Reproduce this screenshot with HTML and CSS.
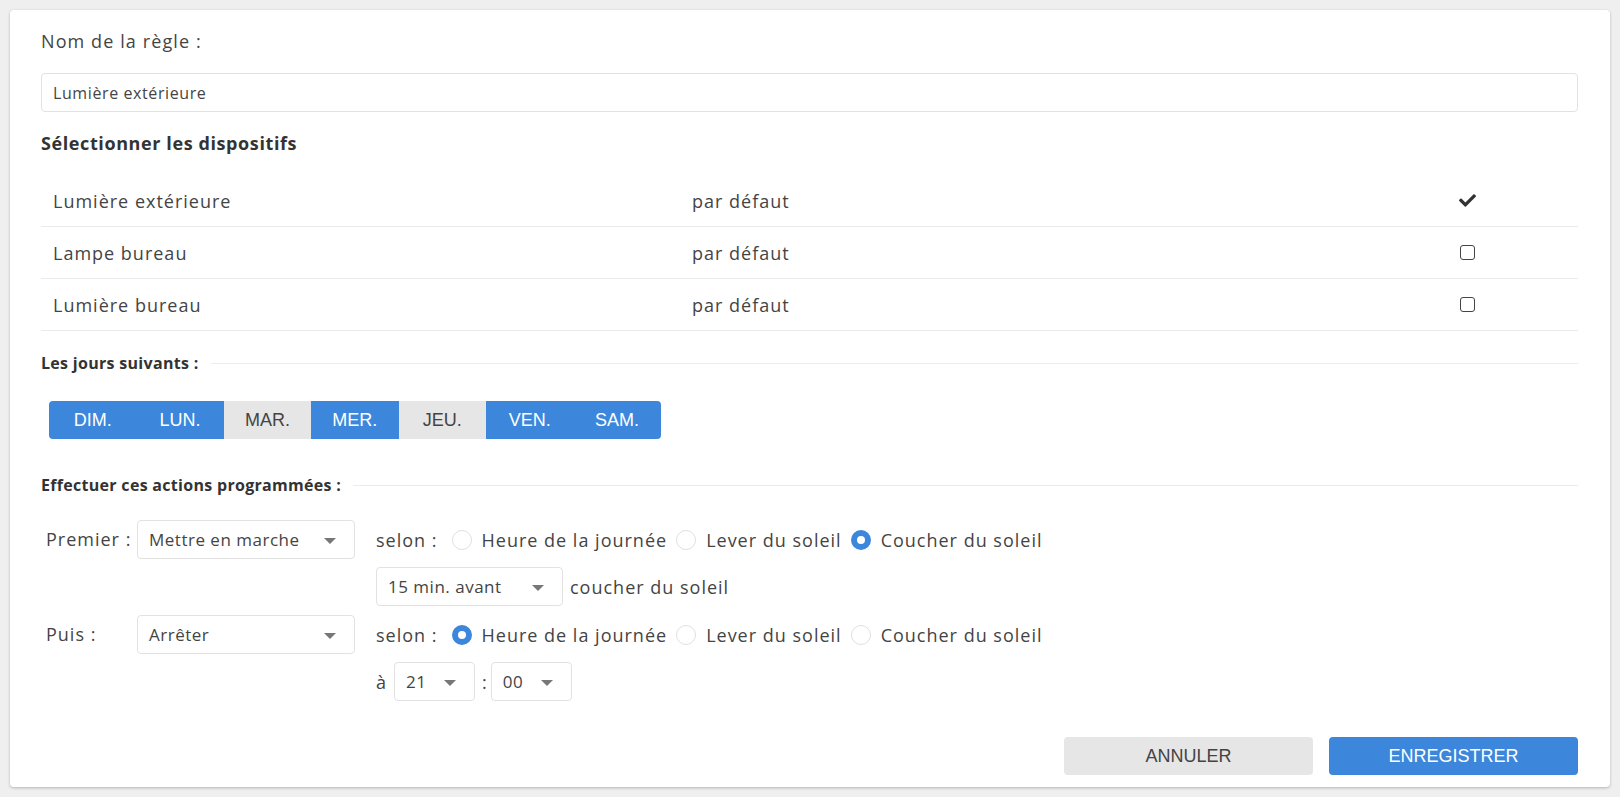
FILE: index.html
```html
<!DOCTYPE html>
<html lang="fr">
<head>
  <meta charset="UTF-8" />
  <title>Règle</title>
  <link rel="stylesheet" href="styles.css">
</head>
<body>

  <div class="card">
    <label class="field-label">Nom de la règle :</label>
    <input class="name-input" type="text" value="Lumière extérieure">

    <h2>Sélectionner les dispositifs</h2>
    <div class="devices">
      <div class="device-row">
        <span class="cell">Lumière extérieure</span>
        <span class="cell">par défaut</span>
        <span class="check">
          <svg width="17" height="13" viewBox="0 60 512 392"><path d="M173.898 439.404l-166.4-166.4c-9.997-9.997-9.997-26.206 0-36.204l36.203-36.204c9.997-9.998 26.207-9.998 36.204 0L192 312.69 432.095 72.596c9.997-9.997 26.207-9.997 36.204 0l36.203 36.204c9.997 9.997 9.997 26.206 0 36.204l-294.4 294.401c-9.998 9.997-26.207 9.997-36.204-.001z" fill="#333"/></svg>
        </span>
      </div>
      <div class="device-row">
        <span class="cell">Lampe bureau</span>
        <span class="cell">par défaut</span>
        <span class="check"><span class="box"></span></span>
      </div>
      <div class="device-row">
        <span class="cell">Lumière bureau</span>
        <span class="cell">par défaut</span>
        <span class="check"><span class="box"></span></span>
      </div>
    </div>

    <div class="legend">Les jours suivants :</div>
    <div class="days">
      <span class="day on">DIM.</span>
      <span class="day on">LUN.</span>
      <span class="day">MAR.</span>
      <span class="day on">MER.</span>
      <span class="day">JEU.</span>
      <span class="day on">VEN.</span>
      <span class="day on">SAM.</span>
    </div>

    <div class="legend">Effectuer ces actions programmées :</div>

    <div class="actions">
      <div class="action">
        <span class="action-label">Premier :</span>
        <div class="select wide">Mettre en marche<i class="caret"></i></div>
        <div class="action-detail">
          <div class="line">
            <span class="selon">selon :</span>
            <span class="radio"></span><span class="opt">Heure de la journée</span>
            <span class="radio"></span><span class="opt">Lever du soleil</span>
            <span class="radio on"></span><span class="opt">Coucher du soleil</span>
          </div>
          <div class="line">
            <div class="select mid">15 min. avant<i class="caret"></i></div>
            <span class="after">coucher du soleil</span>
          </div>
        </div>
      </div>

      <div class="action">
        <span class="action-label">Puis :</span>
        <div class="select wide">Arrêter<i class="caret"></i></div>
        <div class="action-detail">
          <div class="line">
            <span class="selon">selon :</span>
            <span class="radio on"></span><span class="opt">Heure de la journée</span>
            <span class="radio"></span><span class="opt">Lever du soleil</span>
            <span class="radio"></span><span class="opt">Coucher du soleil</span>
          </div>
          <div class="line">
            <span class="at">à</span>
            <div class="select small">21<i class="caret"></i></div>
            <span class="colon">:</span>
            <div class="select small">00<i class="caret"></i></div>
          </div>
        </div>
      </div>
    </div>

    <div class="footer">
      <button class="btn cancel">ANNULER</button>
      <button class="btn save">ENREGISTRER</button>
    </div>
  </div>

</body>
</html>
```

FILE: styles.css
```css
body {
  margin: 0;
  padding: 10px;
  background: #efefef;
  font-family: "Open Sans", Arial, sans-serif;
  color: #444;
}
.card {
  background: #fff;
  border-radius: 4px;
  box-shadow: 0 1px 3px rgba(0, 0, 0, 0.25);
  padding: 20px 32px 12px 31px;
  height: 777px;
  box-sizing: border-box;
  display: flex;
  flex-direction: column;
}
.field-label {
  font-size: 18px;
  letter-spacing: 1.1px;
  line-height: 22px;
}
.name-input {
  margin-top: 21px;
  height: 39px;
  box-sizing: border-box;
  border: 1px solid #e2e2e2;
  border-radius: 4px;
  padding: 0 11px;
  font-family: inherit;
  font-size: 16px;
  letter-spacing: 0.6px;
  color: #444;
}
h2 {
  font-size: 18px;
  font-weight: 700;
  letter-spacing: 0.6px;
  color: #333;
  margin: 20px 0 21px;
  line-height: 22px;
}
.device-row {
  display: grid;
  grid-template-columns: 639px 680px 1fr;
  align-items: center;
  height: 51px;
  border-bottom: 1px solid #ebebeb;
  font-size: 18px;
  letter-spacing: 1px;
}
.cell {
  padding-left: 12px;
}
.check {
  display: flex;
  justify-content: center;
  padding-right: 4px;
}
.box {
  width: 13px;
  height: 13px;
  border: 1.5px solid #444;
  border-radius: 3px;
}
.legend {
  display: flex;
  align-items: center;
  font-size: 16px;
  font-weight: 700;
  letter-spacing: 0.3px;
  color: #333;
  margin-top: 22px;
  line-height: 20px;
}
.legend::after {
  content: "";
  flex: 1;
  height: 1px;
  background: #ececec;
  margin-left: 12px;
}
.days {
  display: flex;
  margin: 28px 0 14px 8px;
}
.day {
  width: 87.4px;
  height: 38px;
  display: flex;
  align-items: center;
  justify-content: center;
  background: #e6e6e6;
  color: #444;
  font-family: "Liberation Sans", Arial, sans-serif;
  font-size: 18px;
}
.day.on {
  background: #3c87db;
  color: #fff;
}
.day:first-child {
  border-radius: 4px 0 0 4px;
}
.day:last-child {
  border-radius: 0 4px 4px 0;
}
.actions {
  margin-top: 25px;
  display: flex;
  flex-direction: column;
  gap: 9px;
}
.action {
  display: flex;
  align-items: flex-start;
  font-size: 18px;
  letter-spacing: 1px;
}
.action-label {
  width: 96px;
  padding-left: 5px;
  box-sizing: border-box;
  line-height: 39px;
}
.select {
  position: relative;
  height: 39px;
  box-sizing: border-box;
  border: 1px solid #e2e2e2;
  border-radius: 4px;
  padding: 0 11px;
  display: flex;
  align-items: center;
  font-size: 17px;
  letter-spacing: 0.5px;
}
.select.wide {
  width: 218px;
}
.select.mid {
  width: 187px;
}
.select.small {
  width: 81px;
}
.caret {
  position: absolute;
  right: 18px;
  top: 17px;
  border-left: 6px solid transparent;
  border-right: 6px solid transparent;
  border-top: 6px solid #777;
}
.action-detail {
  margin-left: 21px;
  display: flex;
  flex-direction: column;
  gap: 8px;
}
.line {
  display: flex;
  align-items: center;
  height: 39px;
}
.selon {
  margin-right: 14px;
}
.radio {
  width: 18px;
  height: 18px;
  border: 1px solid #e0e0e0;
  border-radius: 50%;
  margin-right: 10px;
}
.radio.on {
  box-sizing: border-box;
  width: 20px;
  height: 20px;
  border: 6.5px solid #3c87db;
}
.opt {
  margin-right: 9px;
}
.after {
  margin-left: 7px;
}
.at {
  margin-right: 7px;
}
.colon {
  margin: 0 3px 0 7px;
}
.footer {
  margin-top: auto;
  display: flex;
  justify-content: flex-end;
  gap: 16px;
}
.btn {
  width: 249px;
  height: 38px;
  border: none;
  border-radius: 4px;
  font-family: "Liberation Sans", Arial, sans-serif;
  font-size: 18px;
}
.cancel {
  background: #e6e6e6;
  color: #444;
}
.save {
  background: #3c87db;
  color: #fff;
}
```
